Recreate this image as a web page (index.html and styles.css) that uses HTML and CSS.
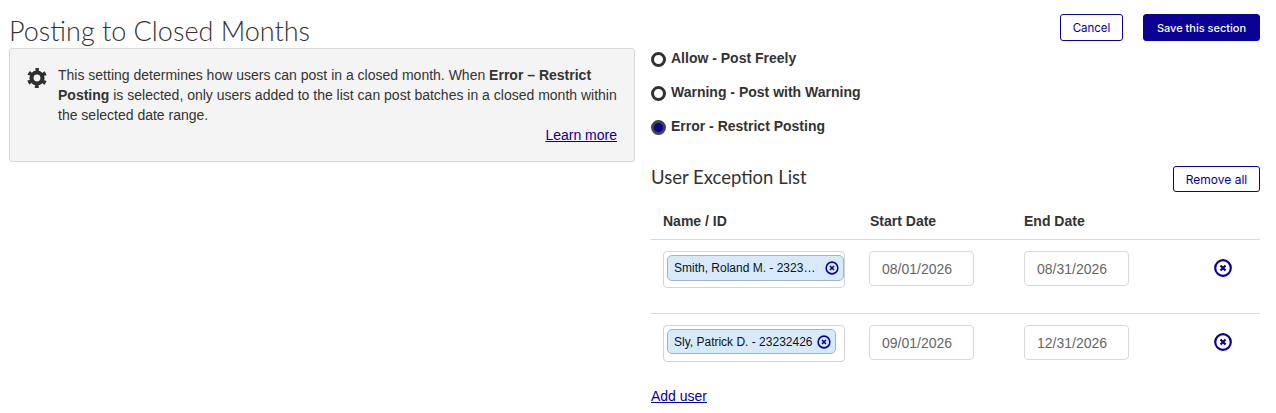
FILE: index.html
```html
<!DOCTYPE html>
<html lang="en">
<head>
<meta charset="utf-8">
<title>Posting to Closed Months</title>
<link rel="stylesheet" href="styles.css">
</head>
<body>
<main class="page">
  <section class="left">
    <h1 class="title">Posting to Closed Months</h1>
    <div class="info">
      <svg class="gear" viewBox="0 0 24 24" width="20" height="20" aria-hidden="true"><circle cx="12" cy="12" r="6.600" fill="none" stroke="#2f2f2f" stroke-width="5"/><circle cx="12" cy="12" r="10" fill="none" stroke="#2f2f2f" stroke-width="4" stroke-dasharray="4.500 5.972" stroke-dashoffset="2.250" transform="rotate(-90 12 12)"/></svg>
      <div class="info-body">
        <p class="info-text">This setting determines how users can post in a closed month. When <b>Error – Restrict Posting</b> is selected, only users added to the list can post batches in a closed month within the selected date range.</p>
        <p class="info-link"><a href="#">Learn more</a></p>
      </div>
    </div>
  </section>
  <section class="right">
    <div class="actions">
      <button class="btn btn-outline btn-cancel">Cancel</button>
      <button class="btn btn-solid">Save this section</button>
    </div>
    <div class="radios">
      <label class="radio"><span class="dot"></span>Allow - Post Freely</label>
      <label class="radio"><span class="dot"></span>Warning - Post with Warning</label>
      <label class="radio"><span class="dot dot-on"></span>Error - Restrict Posting</label>
    </div>
    <div class="list-head">
      <h2 class="list-title">User Exception List</h2>
      <button class="btn btn-outline btn-remove">Remove all</button>
    </div>
    <div class="grid grid-head">
      <div>Name / ID</div>
      <div>Start Date</div>
      <div>End Date</div>
    </div>
    <div class="grid row">
      <div class="field"><span class="chip chip-full"><span class="chip-text">Smith, Roland M. - 23232426</span><svg class="x-small" viewBox="0 0 16 16" width="14" height="14" aria-hidden="true"><circle cx="8" cy="8" r="6.700" fill="none" stroke="#0a0094" stroke-width="1.800"/><path d="M5.700 5.700l4.600 4.600M10.300 5.700l-4.600 4.600" stroke="#0a0094" stroke-width="1.800"/></svg></span></div>
      <div class="date">08/01/2026</div>
      <div class="date">08/31/2026</div>
      <svg class="x-large" viewBox="0 0 18 18" width="18" height="18" aria-hidden="true"><circle cx="9" cy="9" r="7.800" fill="none" stroke="#0a0094" stroke-width="2.200"/><path d="M6.500 6.500l5 5M11.500 6.500l-5 5" stroke="#0a0094" stroke-width="2.200"/></svg>
    </div>
    <div class="grid row">
      <div class="field"><span class="chip"><span class="chip-text">Sly, Patrick D. - 23232426</span><svg class="x-small" viewBox="0 0 16 16" width="14" height="14" aria-hidden="true"><circle cx="8" cy="8" r="6.700" fill="none" stroke="#0a0094" stroke-width="1.800"/><path d="M5.700 5.700l4.600 4.600M10.300 5.700l-4.600 4.600" stroke="#0a0094" stroke-width="1.800"/></svg></span></div>
      <div class="date">09/01/2026</div>
      <div class="date">12/31/2026</div>
      <svg class="x-large" viewBox="0 0 18 18" width="18" height="18" aria-hidden="true"><circle cx="9" cy="9" r="7.800" fill="none" stroke="#0a0094" stroke-width="2.200"/><path d="M6.500 6.500l5 5M11.500 6.500l-5 5" stroke="#0a0094" stroke-width="2.200"/></svg>
    </div>
    <a class="add" href="#">Add user</a>
  </section>
</main>
</body>
</html>
```
FILE: styles.css
```css
* { box-sizing: border-box; }
html, body { margin: 0; background: #fff; }
body { font-family: "Liberation Sans", Arial, sans-serif; font-size: 14px; color: #333; overflow: hidden; }
a { color: #0a0094; }
.page { display: grid; grid-template-columns: 626px 609px; column-gap: 16px; padding: 0 16px 0 9px; height: 413px; }
.title { margin: 0; padding-top: 14px; height: 48px; font-family: Lato, sans-serif; font-weight: 300; font-size: 27px; line-height: 33px; color: #333; }
.info { display: flex; height: 114px; background: #f4f4f4; border: 1px solid #d9d9d9; border-radius: 3px; padding: 16px 17px 0 17px; }
.gear { flex: none; margin: 3px 11px 0 0; }
.info-body { flex: 1; }
.info-text { margin: 0; line-height: 20px; }
.info-link { margin: 0; line-height: 20px; text-align: right; }
.right { display: flex; flex-direction: column; min-width: 0; }
.actions { display: flex; justify-content: flex-end; gap: 20px; padding-top: 14px; height: 41px; flex: none; }
.btn { font-family: Inter, "Liberation Sans", sans-serif; font-size: 12px; border-radius: 3px; border: 1px solid #0a0094; padding: 0; cursor: pointer; }
.btn-outline { background: #fff; color: #0a0094; }
.btn-solid { background: #0a0094; color: #fff; width: 117px; height: 27px; font-weight: 500; font-size: 11px; }
.btn-cancel { width: 63px; height: 27px; font-size: 11.5px; }
.btn-remove { width: 87px; height: 26px; }
.radios { display: flex; flex-direction: column; }
.radio { display: flex; align-items: center; height: 34px; font-weight: bold; color: #333; }
.dot { width: 15px; height: 15px; margin-right: 5px; border-radius: 50%; border: 3px solid #333; background: #fff; position: relative; top: 1px; }
.dot-on { background: #0a0094; border-color: #444; }
.list-head { display: flex; justify-content: space-between; align-items: center; height: 26px; margin-top: 23px; }
.list-title { margin: -4px 0 0; font-family: Lato, sans-serif; font-weight: 400; font-size: 18.5px; color: #333; }
.grid { display: grid; grid-template-columns: 206px 155px 1fr 18px; padding-left: 12px; padding-right: 28px; }
.grid-head { margin-top: 16px; height: 32px; align-items: center; font-weight: bold; border-bottom: 1px solid #dadada; padding-bottom: 6px; }
.grid-head > div:nth-child(2) { padding-left: 1px; }
.row { height: 74px; padding-top: 11px; align-items: start; border-bottom: 1px solid #dadada; }
.row:last-of-type { border-bottom: 0; }
.field { width: 182px; height: 37px; padding: 3px 0 3px 3px; border: 1px solid #d4d4d4; border-radius: 4px; background: #fff; display: flex; align-items: flex-start; }
.chip { display: inline-flex; align-items: center; gap: 4px; height: 25px; padding: 0 4px 0 6px; background: #d6eafc; border: 1px solid #9fb5cd; border-radius: 5px; font-size: 12px; color: #111; min-width: 0; }
.chip-full { width: 100%; height: 26px; }
.chip-text { flex: 1; min-width: 0; white-space: nowrap; overflow: hidden; text-overflow: ellipsis; }
.x-small { flex: none; }
.date { width: 105px; height: 35px; border: 1px solid #d9d9d9; border-radius: 4px; padding-left: 12px; line-height: 34px; color: #666; }
.x-large { align-self: start; margin-top: 8px; }
.add { margin-top: 0; }
```
